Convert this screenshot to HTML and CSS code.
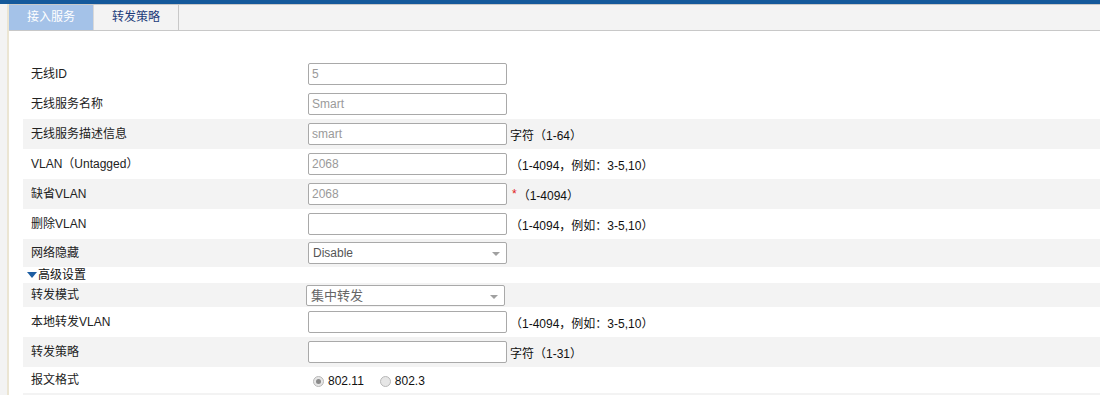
FILE: index.html
```html
<!DOCTYPE html>
<html lang="zh-CN">
<head>
    <meta charset="UTF-8">
    <title>接入服务</title>
    <link rel="stylesheet" href="styles.css">
</head>
<body>
    <div class="topbar"></div>
    <div class="page">
        <div class="side"></div>
        <div class="main">
            <div class="tabs">
                <div class="tab active">接入服务</div>
                <div class="tab">转发策略</div>
            </div>

            <div class="form">
                <div class="row">
                    <div class="label">无线ID</div>
                    <input class="field" type="text" value="5" readonly>
                </div>
                <div class="row">
                    <div class="label">无线服务名称</div>
                    <input class="field" type="text" value="Smart" readonly>
                </div>
                <div class="row alt">
                    <div class="label">无线服务描述信息</div>
                    <input class="field" type="text" value="smart" readonly>
                    <span class="hint">字符（1-64）</span>
                </div>
                <div class="row">
                    <div class="label">VLAN（Untagged）</div>
                    <input class="field" type="text" value="2068" readonly>
                    <span class="hint">（1-4094，例如：3-5,10）</span>
                </div>
                <div class="row alt">
                    <div class="label">缺省VLAN</div>
                    <input class="field" type="text" value="2068" readonly>
                    <span class="req">*</span><span class="hint tight">（1-4094）</span>
                </div>
                <div class="row">
                    <div class="label">删除VLAN</div>
                    <input class="field" type="text" value="">
                    <span class="hint">（1-4094，例如：3-5,10）</span>
                </div>
                <div class="row alt short">
                    <div class="label">网络隐藏</div>
                    <div class="select">Disable</div>
                </div>
                <div class="section">
                    <span class="arrow"></span>高级设置
                </div>
                <div class="row alt shorter">
                    <div class="label">转发模式</div>
                    <div class="select cn">集中转发</div>
                </div>
                <div class="row">
                    <div class="label">本地转发VLAN</div>
                    <input class="field" type="text" value="">
                    <span class="hint">（1-4094，例如：3-5,10）</span>
                </div>
                <div class="row alt">
                    <div class="label">转发策略</div>
                    <input class="field" type="text" value="">
                    <span class="hint">字符（1-31）</span>
                </div>
                <div class="row radios">
                    <div class="label">报文格式</div>
                    <label class="radio"><span class="dot checked"></span>802.11</label>
                    <label class="radio"><span class="dot"></span>802.3</label>
                </div>
                <div class="row alt end"></div>
            </div>
        </div>
    </div>
</body>
</html>
```

FILE: styles.css
```css
body {
    margin: 0;
    font-family: "Liberation Sans", "Noto Sans CJK SC", sans-serif;
    font-size: 12px;
    color: #222;
    background-color: #fff;
    overflow: hidden;
}

.topbar {
    height: 4px;
    background-color: #14599b;
}

.page {
    display: flex;
    height: 391px;
    overflow: hidden;
}

.side {
    width: 7px;
    background-color: #f3f3f3;
    border-right: 2px solid #ebe5d3;
    flex-shrink: 0;
}

.main {
    flex: 1;
    display: flex;
    flex-direction: column;
}

.tabs {
    display: flex;
    height: 25px;
    background-color: #f3f3f3;
    border-top: 1px solid #c8c8c8;
    border-bottom: 1px solid #c8c8c8;
}

.tab {
    width: 84px;
    line-height: 25px;
    text-align: center;
    color: #1c3b7a;
    border-right: 1px solid #c8c8c8;
}

.tab.active {
    background-color: #a4c2e8;
    color: #fff;
    border-right-color: #d8d8d8;
}

.form {
    padding: 28px 0 0 14px;
}

.row {
    display: flex;
    align-items: center;
    height: 30px;
}

.row.alt {
    background-color: #f3f3f3;
}

.row.short {
    height: 28px;
}

.row.shorter {
    height: 24px;
}

.row.radios {
    height: 26px;
    padding-top: 2px;
    box-sizing: border-box;
}

.row.end {
    height: 2px;
}

.label {
    width: 277px;
    padding-left: 8px;
    padding-bottom: 3px;
    flex-shrink: 0;
}

.radios .label {
    padding-bottom: 5px;
}

.field {
    width: 199px;
    height: 22px;
    box-sizing: border-box;
    border: 1px solid #a9a9a9;
    border-radius: 2px;
    padding: 0 3px;
    margin: 0;
    font-family: "Liberation Sans", "Noto Sans CJK SC", sans-serif;
    font-size: 12px;
    color: #9a9a9a;
    background-color: #fff;
    outline: none;
}

.hint {
    margin-left: 3px;
    color: #111;
}

.hint.tight {
    margin-left: 1px;
}

.req {
    color: #e02020;
    margin-left: 5px;
}

.select {
    position: relative;
    width: 199px;
    height: 22px;
    box-sizing: border-box;
    border: 1px solid #a9a9a9;
    border-radius: 2px;
    padding-left: 4px;
    line-height: 20px;
    color: #555;
    background-color: #fff;
}

.select::after {
    content: "";
    position: absolute;
    right: 6px;
    top: 9px;
    border-left: 4px solid transparent;
    border-right: 4px solid transparent;
    border-top: 4px solid #a0a0a0;
}

.select.cn {
    margin-left: -2px;
    height: 21px;
    color: #666;
    font-size: 13px;
}

.section {
    height: 16px;
    line-height: 16px;
    display: flex;
    align-items: center;
    padding-left: 4px;
    color: #111;
}

.arrow {
    width: 0;
    height: 0;
    border-left: 5px solid transparent;
    border-right: 5px solid transparent;
    border-top: 6px solid #1d5ea3;
    margin-right: 1px;
}

.radio {
    display: flex;
    align-items: center;
    margin-left: 5px;
    margin-right: 11px;
    color: #111;
}

.dot {
    width: 11px;
    height: 11px;
    box-sizing: border-box;
    border-radius: 50%;
    border: 1px solid #b8b8b8;
    background-color: #e6e6e6;
    margin-right: 4px;
    position: relative;
}

.dot.checked::after {
    content: "";
    position: absolute;
    left: 2px;
    top: 2px;
    width: 5px;
    height: 5px;
    border-radius: 50%;
    background-color: #8a8a8a;
}
```
